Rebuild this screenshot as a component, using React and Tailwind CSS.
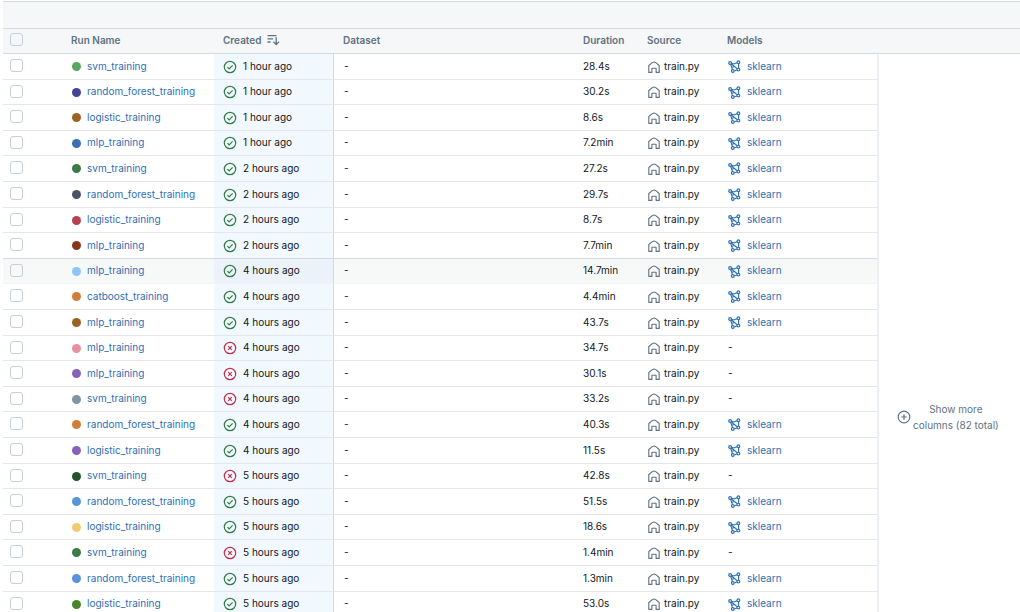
import React from "react";

const RUNS = [
  ["svm_training", "#57a663", "1 hour ago", true, "28.4s"],
  ["random_forest_training", "#454693", "1 hour ago", true, "30.2s"],
  ["logistic_training", "#9a6324", "1 hour ago", true, "8.6s"],
  ["mlp_training", "#3b6fb6", "1 hour ago", true, "7.2min"],
  ["svm_training", "#3c7a48", "2 hours ago", true, "27.2s"],
  ["random_forest_training", "#4a5364", "2 hours ago", true, "29.7s"],
  ["logistic_training", "#b8404f", "2 hours ago", true, "8.7s"],
  ["mlp_training", "#87371f", "2 hours ago", true, "7.7min"],
  ["mlp_training", "#90c4f9", "4 hours ago", true, "14.7min"],
  ["catboost_training", "#d07e38", "4 hours ago", true, "4.4min"],
  ["mlp_training", "#9a6324", "4 hours ago", true, "43.7s"],
  ["mlp_training", "#e792a1", "4 hours ago", false, "34.7s"],
  ["mlp_training", "#8663b9", "4 hours ago", false, "30.1s"],
  ["svm_training", "#8393a3", "4 hours ago", false, "33.2s"],
  ["random_forest_training", "#d07e38", "4 hours ago", true, "40.3s"],
  ["logistic_training", "#8663b9", "4 hours ago", true, "11.5s"],
  ["svm_training", "#26522f", "5 hours ago", false, "42.8s"],
  ["random_forest_training", "#5794dc", "5 hours ago", true, "51.5s"],
  ["logistic_training", "#f1cb73", "5 hours ago", true, "18.6s"],
  ["svm_training", "#3c7a48", "5 hours ago", false, "1.4min"],
  ["random_forest_training", "#5794dc", "5 hours ago", true, "1.3min"],
  ["logistic_training", "#488427", "5 hours ago", true, "53.0s"],
];
const HOVERED = 8;

function StatusIcon({ ok }) {
  return (
    <svg
      viewBox="0 0 14 14"
      className={`mt-0.5 size-3.5 shrink-0 ${ok ? "text-[#2f7f45]" : "text-[#c22f4b]"}`}
      fill="none"
      stroke="currentColor"
      strokeWidth="1.2"
      role="img"
      aria-label={ok ? "Finished" : "Failed"}
    >
      <circle cx="7" cy="7" r="5.7" />
      {ok ? <path d="M4.4 7.1 6.2 8.9 9.6 5.4" /> : <path d="m5.2 5.2 3.6 3.6M8.8 5.2 5.2 8.8" />}
    </svg>
  );
}

function HomeIcon() {
  return (
    <svg viewBox="0 0 12 12" className="mt-0.5 size-3 shrink-0 text-[#5f7281]" fill="none" stroke="currentColor" strokeWidth="1.1" strokeLinejoin="round" aria-hidden="true">
      <path d="M.8 11.4V4.5L4.3 1.6Q6 .5 7.7 1.6L11.2 4.5v6.9H8.1V7.3H3.9v4.1z" />
    </svg>
  );
}

function ModelIcon() {
  return (
    <svg viewBox="0 0 13 13" className="mt-0.5 size-[13px] shrink-0 text-[#2d6fb5]" fill="none" stroke="currentColor" strokeWidth="1.15" aria-hidden="true">
      <circle cx="2.1" cy="3" r="1.4" />
      <circle cx="10.4" cy="2.2" r="1.4" />
      <circle cx="10.4" cy="9.6" r="1.4" />
      <circle cx="4.8" cy="11" r="1.4" />
      <path d="M3.5 3.2 6 4l3-1.2M3.3 4 9.3 8.7M10.6 3.6v4.6M2.6 4.4 3.6 7l.9 2.6M3.5 7h2.2M6.2 10.8l2.9-.8" />
    </svg>
  );
}

function SortIcon() {
  return (
    <svg viewBox="0 0 13 12" className="h-3 w-[13px] shrink-0" fill="none" stroke="currentColor" strokeWidth="1.3" aria-hidden="true">
      <path d="M.5 1.6h9M.5 4.8h5.6M.5 8h3M9.2 3.2v7.2M6.3 7.6l2.9 2.9 2.9-2.9" />
    </svg>
  );
}

function Tick({ label }) {
  return (
    <input
      type="checkbox"
      aria-label={label}
      className="block size-[13px] appearance-none rounded-[3px] border border-[#c3d0db] bg-transparent checked:bg-[#2d6fb5]"
    />
  );
}

const HEAD = "border-b border-[#d1d9e1] pb-0.5 text-left font-semibold";

function Row({ run, index }) {
  const [name, color, created, ok, duration] = run;
  const hovered = index === HOVERED;
  const line = index === HOVERED - 1 ? "border-[#d1d9e1]" : hovered ? "border-[#f1f3f5]" : "border-[#e3e7ec]";
  const cell = `border-b ${line} pb-0.5 ${hovered ? "bg-[#f7f9f9]" : ""}`;
  return (
    <tr className="h-[26px] [&:nth-child(5n+2)]:h-[25px] [&:nth-child(5n+4)]:h-[25px]">
      <td className={`${cell} pl-[7px]`}>
        <Tick label={`Select ${name}, ${created}`} />
      </td>
      <td className={`${cell} pl-[9px]`}>
        <div className="flex items-center gap-1.5">
          <span className="mt-0.5 size-[9px] shrink-0 rounded-full" style={{ backgroundColor: color }} />
          <a href="#run" className="text-[#2d6fb5]">{name}</a>
        </div>
      </td>
      <td className={`border-b border-r border-r-[#d1d9e1] pb-0.5 ${line} pl-[9px] ${hovered ? "bg-[#ebf2f9]" : "bg-[#f1f8fe]"}`}>
        <div className="flex items-center gap-1.5">
          <StatusIcon ok={ok} />
          <span>{created}</span>
        </div>
      </td>
      <td className={`${cell} pl-[10px]`}>-</td>
      <td className={`${cell} pl-[9px]`}>{duration}</td>
      <td className={`${cell} pl-[10px]`}>
        <div className="flex items-center gap-1">
          <HomeIcon />
          <span>train.py</span>
        </div>
      </td>
      <td className={`${cell} pl-[10px]`}>
        {ok ? (
          <div className="flex items-center gap-1.5">
            <ModelIcon />
            <a href="#model" className="text-[#2d6fb5]">sklearn</a>
          </div>
        ) : (
          "-"
        )}
      </td>
      {index === 0 && (
        <td rowSpan={RUNS.length} className="border-l-2 border-[#eceff3] pl-[18px] pt-[347px] align-top">
          <button type="button" className="flex items-center gap-0.5 text-[#5f7281]">
            <svg viewBox="0 0 14 14" className="size-3.5 shrink-0" fill="none" stroke="currentColor" strokeWidth="1.2" aria-hidden="true">
              <circle cx="7" cy="7" r="5.8" />
              <path d="M7 4.3v5.4M4.3 7h5.4" />
            </svg>
            <span className="text-center leading-4">
              Show more
              <br />
              columns (82 total)
            </span>
          </button>
        </td>
      )}
    </tr>
  );
}

export default function App() {
  return (
    <main className="h-screen overflow-hidden bg-white pl-[3px] pt-px font-['Inter',sans-serif] text-[10px] leading-4 text-[#11171c]">
      <div className="h-[27px] border-t border-[#d1d9e1] bg-[#f5f7f9]" />
      <table className="w-full table-fixed border-separate border-spacing-0 whitespace-nowrap">
        <colgroup>
          <col className="w-[60px]" />
          <col className="w-[151px]" />
          <col className="w-[120px]" />
          <col className="w-[240px]" />
          <col className="w-16" />
          <col className="w-20" />
          <col className="w-[159px]" />
          <col />
        </colgroup>
        <thead className="bg-[#f5f7f9] text-[#5f7281]">
          <tr className="h-[26px] [&>*]:border-t">
            <th className="border-b border-[#d1d9e1] pb-1 pl-[7px]"><Tick label="Select all runs" /></th>
            <th className={`${HEAD} pl-2`}>Run Name</th>
            <th className={`${HEAD} pl-[9px]`} aria-sort="descending">
              <button type="button" className="flex items-center gap-1.5">
                Created
                <SortIcon />
              </button>
            </th>
            <th className={`${HEAD} pl-[9px]`}>Dataset</th>
            <th className={`${HEAD} pl-[9px]`}>Duration</th>
            <th className={`${HEAD} pl-[9px]`}>Source</th>
            <th className={`${HEAD} pl-[9px]`}>Models</th>
            <td className={HEAD} />
          </tr>
        </thead>
        <tbody>
          {RUNS.map((run, i) => (
            <Row key={i} run={run} index={i} />
          ))}
        </tbody>
      </table>
    </main>
  );
}
